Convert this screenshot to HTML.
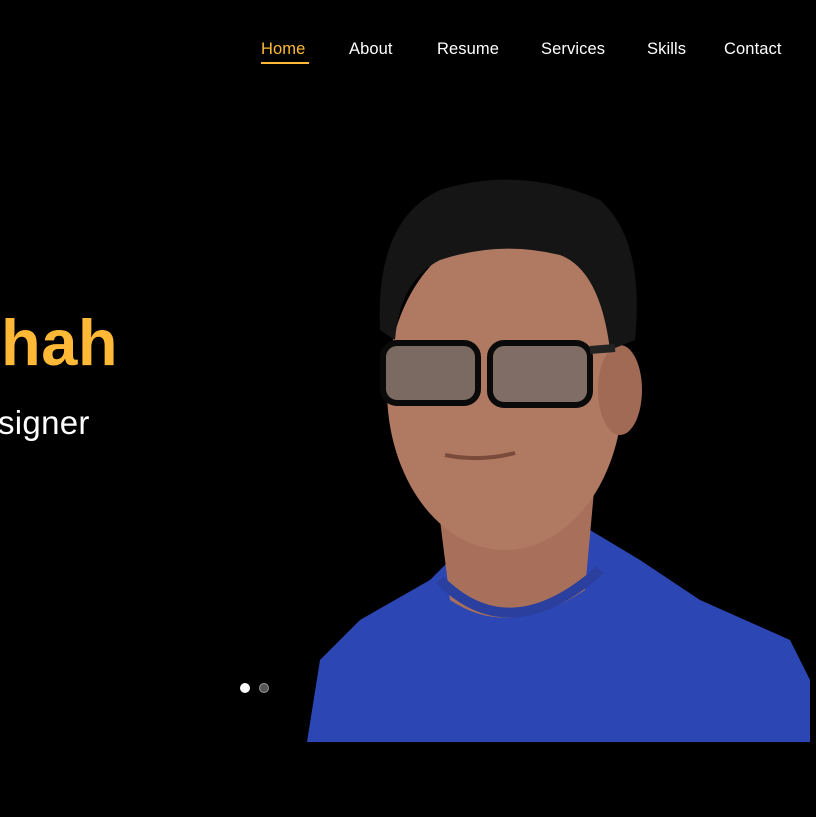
<!DOCTYPE html>
<html><head><meta charset="utf-8"><style>
html,body{margin:0;padding:0;background:#000;width:816px;height:817px;overflow:hidden;font-family:"Liberation Sans",sans-serif;position:relative}
nav a{position:absolute;top:40px;color:#fff;font-size:16.5px;text-decoration:none;letter-spacing:0.1px}
.h1{position:absolute;left:1px;top:305px;color:#ffb936;font-size:65px;font-weight:bold;letter-spacing:0.5px;white-space:nowrap}
.h2{position:absolute;left:-2px;top:404px;color:#fff;font-size:33px;letter-spacing:0.3px;white-space:nowrap}
.dot{position:absolute;top:683px;width:10px;height:10px;border-radius:50%;box-sizing:border-box}
</style></head><body>
<nav>
<a style="left:261px;color:#ffb936">Home</a>
<div style="position:absolute;left:261px;top:62px;width:48px;height:2px;background:#ffb936"></div>
<a style="left:349px">About</a>
<a style="left:437px">Resume</a>
<a style="left:541px">Services</a>
<a style="left:647px">Skills</a>
<a style="left:724px">Contact</a>
</nav>
<div class="h1">hah</div>
<div class="h2">signer</div>
<svg style="position:absolute;left:0;top:0" width="816" height="817">
<path d="M307 742 L320 660 L360 620 L430 580 L470 540 L590 530 L640 560 L700 600 L790 640 L810 680 L810 742 Z" fill="#2c46b4"/>
<path d="M440 520 L450 600 Q510 640 585 590 L595 480 Z" fill="#a8705a"/>
<path d="M440 580 Q510 650 600 570" stroke="#2a3f9e" stroke-width="10" fill="none"/>
<ellipse cx="505" cy="390" rx="118" ry="160" fill="#b07a62"/>
<ellipse cx="620" cy="390" rx="22" ry="45" fill="#a06a55"/>
<path d="M380 330 Q375 220 440 190 Q520 165 600 200 Q645 240 635 340 L610 350 Q600 270 560 255 Q500 240 440 260 Q400 280 395 340 Z" fill="#151515"/>
<rect x="383" y="343" width="95" height="60" rx="14" fill="#7a6a62" stroke="#0a0a0a" stroke-width="6"/>
<rect x="490" y="343" width="100" height="62" rx="14" fill="#806e66" stroke="#0a0a0a" stroke-width="6"/>
<path d="M590 350 L615 348" stroke="#222" stroke-width="8"/>
<path d="M445 455 Q480 462 515 453" stroke="#7a4a3a" stroke-width="4" fill="none"/>
</svg>
<div class="dot" style="left:240px;background:#fff"></div>
<div class="dot" style="left:259px;background:#555;border:1.5px solid #999"></div>
</body></html>
